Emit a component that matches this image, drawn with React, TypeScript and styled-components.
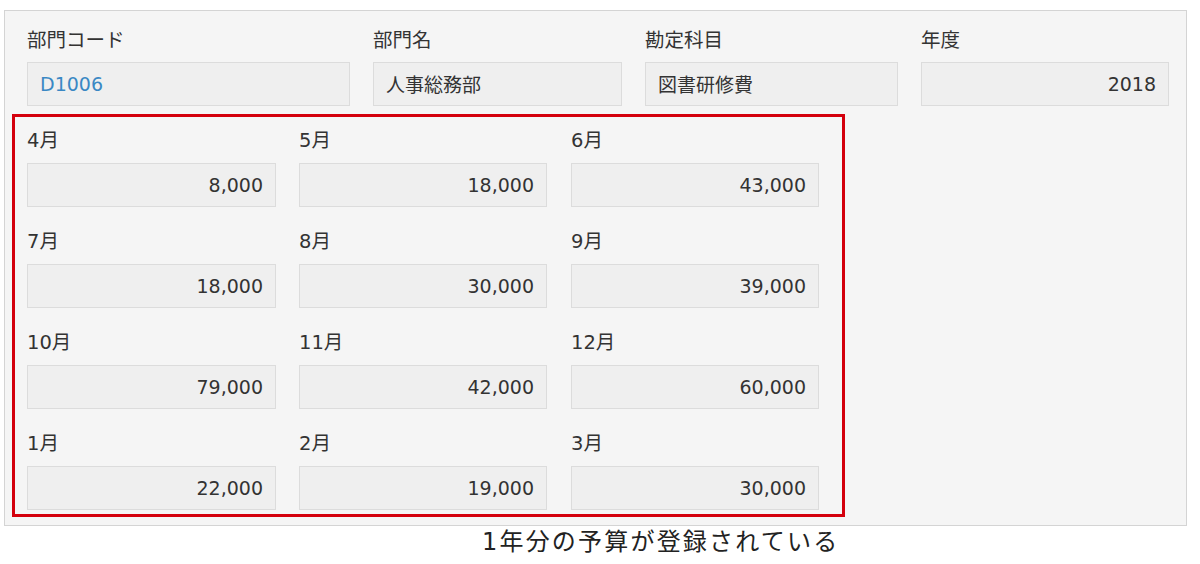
import React from "react";
import styled, { createGlobalStyle } from "styled-components";

const GlobalStyle = createGlobalStyle`
    html, body {
        margin: 0;
        background: #ffffff;
    }
    body {
        font-family: "DejaVu Sans", "Noto Sans CJK JP", sans-serif;
        color: #333333;
    }
`;

const Panel = styled.div`
    margin: 10px 0 0 4px;
    width: 1183px;
    border: 1px solid #d4d4d4;
    background: #f5f5f5;
    padding: 0 0 8px 7px;
    box-sizing: border-box;
`;

const HeaderRow = styled.div`
    display: grid;
    grid-template-columns: 323px 249px 253px 248px;
    column-gap: 23px;
    padding: 18px 0 0 15px;
`;

const Field = styled.div`
    display: flex;
    flex-direction: column;
`;

const Label = styled.div<{ $gap?: number }>`
    font-size: 19.5px;
    line-height: 24px;
    height: 24px;
    margin-bottom: ${(p) => p.$gap ?? 9}px;
    color: #333333;
    white-space: nowrap;
`;

const Value = styled.div<{ $align?: "left" | "right"; $link?: boolean }>`
    height: 44px;
    box-sizing: border-box;
    border: 1px solid #dcdcdc;
    background: #efefef;
    display: flex;
    align-items: center;
    justify-content: ${(p) => (p.$align === "right" ? "flex-end" : "flex-start")};
    padding: 0 12px 1px;
    font-size: 19px;
    color: ${(p) => (p.$link ? "#3a88c4" : "#333333")};
    white-space: nowrap;
`;

const Highlight = styled.div`
    margin-top: 8px;
    width: 833px;
    box-sizing: border-box;
    border: 3px solid #d4000d;
    padding: 12px 22px 4px 12px;
    display: grid;
    grid-template-columns: 249px 248px 249px;
    column-gap: 23px;
    row-gap: 23px;
    & > :nth-child(3n + 3) {
        margin-left: 1px;
    }
`;

const Caption = styled.div`
    margin-left: 482px;
    font-family: "DejaVu Sans", "Noto Sans CJK JP", sans-serif;
    font-size: 24px;
    line-height: 32px;
    letter-spacing: 2.2px;
    color: #222222;
    white-space: nowrap;
`;

interface HeaderField {
    label: string;
    value: string;
    align?: "left" | "right";
    link?: boolean;
}

const headerFields: HeaderField[] = [
    { label: "部門コード", value: "D1006", link: true },
    { label: "部門名", value: "人事総務部" },
    { label: "勘定科目", value: "図書研修費" },
    { label: "年度", value: "2018", align: "right" },
];

const budgets: [string, string][] = [
    ["4月", "8,000"],
    ["5月", "18,000"],
    ["6月", "43,000"],
    ["7月", "18,000"],
    ["8月", "30,000"],
    ["9月", "39,000"],
    ["10月", "79,000"],
    ["11月", "42,000"],
    ["12月", "60,000"],
    ["1月", "22,000"],
    ["2月", "19,000"],
    ["3月", "30,000"],
];

export default function App() {
    return (
        <>
            <GlobalStyle />
            <Panel>
                <HeaderRow>
                    {headerFields.map((f) => (
                        <Field key={f.label}>
                            <Label>{f.label}</Label>
                            <Value $align={f.align} $link={f.link}>
                                {f.value}
                            </Value>
                        </Field>
                    ))}
                </HeaderRow>
                <Highlight>
                    {budgets.map(([month, amount]) => (
                        <Field key={month}>
                            <Label $gap={10}>{month}</Label>
                            <Value $align="right">{amount}</Value>
                        </Field>
                    ))}
                </Highlight>
            </Panel>
            <Caption>1年分の予算が登録されている</Caption>
        </>
    );
}
